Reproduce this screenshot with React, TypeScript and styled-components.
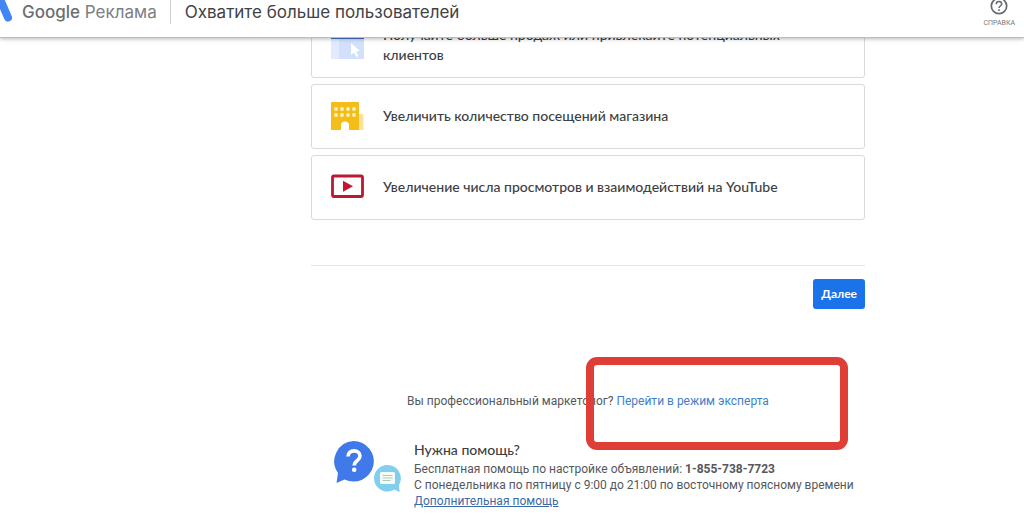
import React from "react";
import styled, { createGlobalStyle } from "styled-components";

const display = `Lato, Inter, "Open Sans", sans-serif`;
const heading = `Inter, "Open Sans", sans-serif`;

const GlobalStyle = createGlobalStyle`
  *, *::before, *::after { box-sizing: border-box; }
  body {
    margin: 0;
    background: #fff;
    color: #55585c;
    font: 12px/16px Roboto, "Liberation Sans", sans-serif;
  }
  h1, h2, p, ul { margin: 0; padding: 0; }
`;

const Header = styled.header`
  position: sticky;
  top: 0;
  z-index: 2;
  display: flex;
  align-items: flex-start;
  height: 38px;
  background: #fff;
  border-bottom: 1px solid #bdbdbd;
  box-shadow: 0 1px 4px rgba(0, 0, 0, 0.28);
`;

const Brand = styled.a`
  display: flex;
  align-items: flex-start;
  color: #7b7e82;
  font: 400 17px/24px ${heading};
  text-decoration: none;
  svg { flex: none; margin-right: 10px; }
`;

const BrandName = styled.span`
  font-weight: 500;
  color: #6b6e72;
`;

const Title = styled.h1`
  margin-left: 13px;
  padding-left: 14px;
  border-left: 1px solid #cfcfcf;
  color: #3f4246;
  font: 400 17px/24px ${heading};
`;

const HelpButton = styled.button`
  display: flex;
  flex-direction: column;
  align-items: center;
  margin-left: auto;
  padding: 0 9px;
  border: 0;
  background: none;
  color: #77797c;
  font: 400 7px/10px Roboto, sans-serif;
  text-transform: uppercase;
  svg { margin: -3px 0 3px; }
`;

const Main = styled.main`
  padding: 0 0 8px 152px;
  margin-top: -25px;
`;

const Column = styled.div`
  max-width: 554px;
  margin: 0 auto;
`;

const Goals = styled.ul`
  display: flex;
  flex-direction: column;
  gap: 6px;
  list-style: none;
`;

const GoalCard = styled.button`
  display: flex;
  align-items: center;
  gap: 19px;
  width: 100%;
  min-height: 65px;
  padding: 0 64px 2px 19px;
  border: 1px solid #d9dadc;
  border-radius: 3px;
  background: #fff;
  color: #3c4043;
  font: 500 14px/20px ${display};
  text-align: left;
  svg { flex: none; }
`;

const Actions = styled.div`
  display: flex;
  justify-content: flex-end;
  margin-top: 45px;
  padding-top: 13px;
  border-top: 1px solid #e4e4e4;
`;

const NextButton = styled.button`
  height: 30px;
  padding: 0 8px;
  border: 0;
  border-radius: 3px;
  background: #1a73e8;
  color: #fff;
  font: 700 12px/16px ${display};
`;

const Expert = styled.p`
  position: relative;
  margin-top: 84px;
  text-align: center;
`;

const Highlight = styled.span`
  position: absolute;
  top: -36px;
  right: 17px;
  width: 262px;
  height: 93px;
  border: 8px solid #df3e36;
  border-radius: 11px;
  pointer-events: none;
`;

const Link = styled.a<{ $underlined?: boolean }>`
  color: ${(p) => (p.$underlined ? "#3c6aa8" : "#3f7fc6")};
  text-decoration: ${(p) => (p.$underlined ? "underline" : "none")};
`;

const Support = styled.section`
  display: flex;
  align-items: flex-start;
  gap: 12px;
  margin-top: 32px;
  padding-left: 22px;
  svg { flex: none; }
`;

const SupportTitle = styled.h2`
  margin-bottom: 2px;
  color: #3c4043;
  font: 500 14px/18px ${display};
`;

const ProductMark = () => (
  <svg width="12" height="24" viewBox="0 0 12 24" aria-hidden="true">
    <path d="M-3-8 L8 17.500" stroke="#4285f4" strokeWidth="8" strokeLinecap="round" />
  </svg>
);

const HelpIcon = () => (
  <svg width="18" height="18" viewBox="0 0 18 18" fill="none" stroke="#66696d" aria-hidden="true">
    <circle cx="9" cy="9" r="7.700" strokeWidth="1.700" />
    <path d="M6.300 7.300c0-1.700 1.200-2.700 2.700-2.700s2.700 1 2.700 2.500c0 1.800-2.700 2-2.700 4" strokeWidth="1.500" />
    <path d="M9 12.300v1.600" strokeWidth="1.600" />
  </svg>
);

const SalesIcon = () => (
  <svg width="33" height="28" viewBox="0 0 33 28" aria-hidden="true">
    <path d="M0 0h33v28H0z" fill="#d2e0fc" />
    <path d="M0 0h33v8H0z" fill="#4674c9" />
    <path d="M0 8h8v20H0z" fill="#e2ebfd" />
    <path d="M20 12l9 8-4 .5 2.500 4.500-2 1-2.500-4.600-3 2.600z" fill="#fff" />
  </svg>
);

const StoreIcon = () => (
  <svg width="33" height="28" viewBox="0 0 33 28" aria-hidden="true">
    <path d="M27 12h4.500a1 1 0 0 1 1 1v15H27z" fill="#fbe29a" />
    <path d="M1 0h26a1 1 0 0 1 1 1v27H18v-4.500a4 4 0 0 0-8 0V28H0V1a1 1 0 0 1 1-1z" fill="#f4bd17" />
    <g fill="#fff2c4">
      {[5, 11, 17, 23].map((x) => [7, 13].map((y) => <circle key={`${x}-${y}`} cx={x} cy={y} r="1.900" />))}
    </g>
  </svg>
);

const VideoIcon = () => (
  <svg width="33" height="28" viewBox="0 0 33 28" aria-hidden="true">
    <rect x="1.500" y="3" width="30" height="20.500" rx="1.500" fill="#fff" stroke="#bd1830" strokeWidth="2.800" />
    <path d="M12 7.700L22 13.200 12 18.700z" fill="#c5162d" />
  </svg>
);

const ChatIcon = () => (
  <svg width="69" height="52" viewBox="0 0 69 52" aria-hidden="true">
    <path d="M20.500 0a20.300 20.300 0 1 1-9 38.500L3.500 42l1.500-10A20.300 20.300 0 0 1 20.500 0z" fill="#4079ea" />
    <path d="M15 15.500c0-3.700 2.500-5.600 6-5.600s6 2 6 5.200c0 4.500-5.800 4.500-5.800 9.400" fill="none" stroke="#fff" strokeWidth="3.600" />
    <circle cx="21.200" cy="28.700" r="2.300" fill="#fff" />
    <path d="M54.500 24a13.300 13.300 0 0 1 11.300 20.300l.9 6.900-5.200-2.700A13.300 13.300 0 1 1 54.500 24z" fill="#81cfef" />
    <rect x="47" y="31" width="15" height="12" rx="1.500" fill="#f6fbf8" />
    <path d="M49.500 34.500h10M49.500 37h10M49.500 39.500h8" stroke="#a8cdbd" strokeWidth="1" />
  </svg>
);

const goals = [
  { icon: <SalesIcon />, label: "Получайте больше продаж или привлекайте потенциальных клиентов" },
  { icon: <StoreIcon />, label: "Увеличить количество посещений магазина" },
  { icon: <VideoIcon />, label: "Увеличение числа просмотров и взаимодействий на YouTube" },
];

export default function App() {
  return (
    <>
      <GlobalStyle />
      <Header>
        <Brand href="#">
          <ProductMark />
          <span><BrandName>Google</BrandName> Реклама</span>
        </Brand>
        <Title>Охватите больше пользователей</Title>
        <HelpButton type="button">
          <HelpIcon />
          Справка
        </HelpButton>
      </Header>
      <Main>
        <Column>
          <Goals>
            {goals.map((goal) => (
              <li key={goal.label}>
                <GoalCard type="button">
                  {goal.icon}
                  <span>{goal.label}</span>
                </GoalCard>
              </li>
            ))}
          </Goals>
          <Actions>
            <NextButton type="button">Далее</NextButton>
          </Actions>
          <Expert>
            Вы профессиональный маркетолог? <Link href="#expert">Перейти в режим эксперта</Link>
            <Highlight />
          </Expert>
          <Support>
            <ChatIcon />
            <div>
              <SupportTitle>Нужна помощь?</SupportTitle>
              <p>Бесплатная помощь по настройке объявлений: <b>1-855-738-7723</b></p>
              <p>С понедельника по пятницу с 9:00 до 21:00 по восточному поясному времени</p>
              <p><Link href="#help" $underlined>Дополнительная помощь</Link></p>
            </div>
          </Support>
        </Column>
      </Main>
    </>
  );
}
